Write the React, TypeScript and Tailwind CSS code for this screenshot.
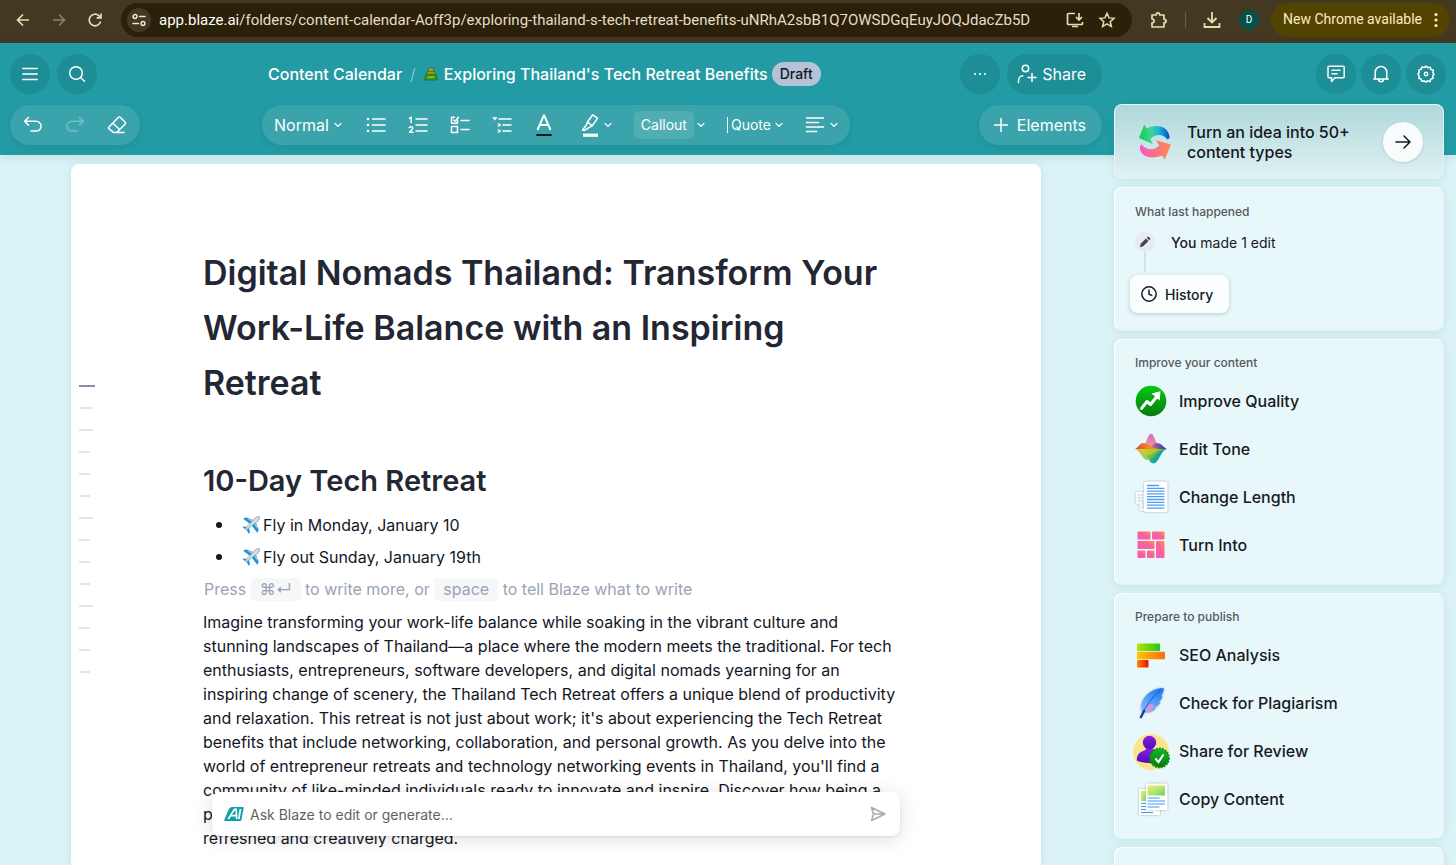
import type { ReactNode } from "react";

type IconProps = { children: ReactNode; className?: string; box?: string };

function Line({ children, className = "size-5", box = "0 0 20 20" }: IconProps) {
  return (
    <svg
      viewBox={box}
      className={`shrink-0 ${className}`}
      fill="none"
      stroke="currentColor"
      strokeWidth="1.5"
      strokeLinecap="round"
      strokeLinejoin="round"
      aria-hidden="true"
    >
      {children}
    </svg>
  );
}

function Chevron() {
  return (
    <Line className="size-2" box="0 0 8 8">
      <path d="M1 2.4 4 5.4 7 2.4" strokeWidth="1.3" />
    </Line>
  );
}

function BrowserBar() {
  return (
    <div className="flex h-[43px] shrink-0 items-center bg-[#433821] pb-1 pl-3.5 pr-1.5 font-[Roboto,'Noto_Sans',sans-serif] text-[#e9dcb0]">
      <button aria-label="Back" className="mr-[18px]">
        <Line className="size-[18px]" box="0 0 18 18">
          <path d="M15 9H4M9 3.5 3.5 9 9 14.5" strokeLinecap="butt" strokeLinejoin="miter" strokeWidth="1.7" />
        </Line>
      </button>
      <button aria-label="Forward" className="mr-[18px] text-[#8d8368]">
        <Line className="size-[18px]" box="0 0 18 18">
          <path d="M3 9h11M9 3.5 14.5 9 9 14.5" strokeLinecap="butt" strokeLinejoin="miter" strokeWidth="1.6" />
        </Line>
      </button>
      <button aria-label="Reload" className="mr-[17px]">
        <Line className="size-[18px]" box="0 0 18 18">
          <path d="M14.6 10.5A5.8 5.8 0 1 1 13 4.8l1.8 1.9M15 2.5v4.4h-4.4" strokeLinecap="butt" strokeLinejoin="miter" strokeWidth="1.7" />
        </Line>
      </button>
      <div className="flex h-[34px] min-w-0 flex-1 items-center rounded-full bg-[#2b2009] pl-1.5 pr-4">
        <span className="mr-2 grid size-6 shrink-0 place-items-center rounded-full bg-[#433821] text-[#ede6d2]">
          <Line className="size-4" box="0 0 16 16">
            <circle cx="4" cy="4.5" r="1.9" />
            <path d="M8.5 4.5H14M2 11.5h5.5" />
            <circle cx="12" cy="11.5" r="1.9" />
          </Line>
        </span>
        <p className="min-w-0 flex-1 truncate text-[15px] leading-5 text-[#e6ddc7]">
          <span className="text-white">app.blaze.ai</span>
          /folders/content-calendar-Aoff3p/exploring-thailand-s-tech-retreat-benefits-uNRhA2sbB1Q7OWSDGqEuyJOQJdacZb5D
        </p>
        <button aria-label="Install app" className="ml-3">
          <Line className="size-[18px]" box="0 0 18 18">
            <path d="M9 2.5H2.5A1 1 0 0 0 1.500 3.500v9a1 1 0 0 0 1 1h13a1 1 0 0 0 1-1V11M6 15.500h6M13 2v6.500M10 6l3 3 3-3" strokeLinecap="butt" strokeLinejoin="miter" strokeWidth="1.7" />
          </Line>
        </button>
        <button aria-label="Bookmark this page" className="ml-3.5">
          <Line className="size-[18px]" box="0 0 18 18">
            <path d="m9 2.300 2 4.600 5 .45-3.800 3.300 1.150 4.900L9 12.950l-4.350 2.600 1.150-4.900L2 7.350l5-.45z" strokeLinejoin="miter" />
          </Line>
        </button>
      </div>
      <button aria-label="Extensions" className="ml-[18px]">
        <Line className="size-[18px]" box="0 0 18 18">
          <path d="M2 4h4.200V3.600a1.700 1.700 0 0 1 3.400 0V4H14v4.300h.4a1.700 1.700 0 0 1 0 3.400H14V16H2v-4.200c1.300 0 2.100-.8 2.100-1.900S3.300 8 2 8z" strokeWidth="1.7" />
        </Line>
      </button>
      <span className="ml-[17px] h-4 w-px bg-[#6d6244]" />
      <button aria-label="Downloads" className="ml-4">
        <Line className="size-5">
          <path d="M10 2v10M5.500 8 10 12.500 14.500 8M2.500 13v4h15v-4" strokeLinecap="butt" strokeLinejoin="miter" strokeWidth="1.8" />
        </Line>
      </button>
      <span className="ml-[17px] grid size-5 place-items-center rounded-full bg-[#04514a] text-[10px] text-white">D</span>
      <button className="ml-3 flex h-[34px] items-center gap-3 rounded-full bg-[#534300] pl-3 pr-3 text-[14px] text-[#fbecc0]">
        New Chrome available
        <svg viewBox="0 0 4 16" className="h-4 w-1" fill="currentColor" aria-hidden="true">
          <circle cx="2" cy="2.500" r="1.600" />
          <circle cx="2" cy="8" r="1.600" />
          <circle cx="2" cy="13.500" r="1.600" />
        </svg>
      </button>
    </div>
  );
}

function RoundButton({ label, children }: { label: string; children: ReactNode }) {
  return (
    <button aria-label={label} className="grid size-10 shrink-0 place-items-center rounded-full bg-[#1d8d96]">
      {children}
    </button>
  );
}

function TitleEmoji() {
  return (
    <svg viewBox="0 0 14 14" className="size-3.5 shrink-0" aria-hidden="true">
      <path d="M4.500 1h5l.7 4H3.800z" fill="#b39a3c" stroke="#5c5a26" strokeWidth=".8" />
      <path d="M3.300 4.300h7.400l.8 3.500h-9z" fill="#6fae1f" stroke="#3f6d17" strokeWidth=".8" />
      <path d="M1.800 7.600h10.400l1.100 5.400H.7z" fill="#3f9620" stroke="#2c6620" strokeWidth=".8" />
      <path d="M4 10.200h6" stroke="#9ad23e" strokeWidth="1.200" />
    </svg>
  );
}

function Header() {
  return (
    <header className="grid shrink-0 grid-cols-[252px_1fr_344px] gap-y-[11px] bg-[#229ba4] px-2.5 pb-2.5 pt-[11px] text-white shadow-[0_2px_10px_rgba(0,90,100,0.12)]">
      <div className="flex gap-[7px]">
        <RoundButton label="Open menu">
          <Line className="size-4" box="0 0 16 16">
            <path d="M0.800 2.500h14.400M.8 8h14.400M.8 13.500h14.400" />
          </Line>
        </RoundButton>
        <RoundButton label="Search">
          <Line className="size-[18px]" box="0 0 18 18">
            <circle cx="8" cy="8" r="6.300" />
            <path d="m12.700 12.700 3.800 3.500" />
          </Line>
        </RoundButton>
      </div>
      <div className="flex items-center justify-between">
        <nav aria-label="Breadcrumb" className="flex items-center pl-1.5 text-[16px] font-medium">
          <a href="#calendar">Content Calendar</a>
          <span className="mx-2 font-light text-[#8fd0d5]">/</span>
          <TitleEmoji />
          <h1 className="ml-1.5">Exploring Thailand's Tech Retreat Benefits</h1>
          <span className="ml-1 rounded-full bg-[#b4c3d8] px-2 text-[14px] font-medium leading-6 text-[#14161d]">Draft</span>
        </nav>
        <div className="flex gap-[7px]">
          <RoundButton label="More">
            <svg viewBox="0 0 16 4" className="h-1 w-4" fill="currentColor" aria-hidden="true">
              <circle cx="3" cy="2" r="1.100" />
              <circle cx="8" cy="2" r="1.100" />
              <circle cx="13" cy="2" r="1.100" />
            </svg>
          </RoundButton>
          <button className="flex h-10 items-center gap-[5px] rounded-full bg-[#1d8d96] pl-2.5 pr-4 text-[16px]">
            <Line className="size-5">
              <circle cx="8.500" cy="4.500" r="3.200" />
              <path d="M1.500 18.500v-2.200a4.500 4.500 0 0 1 4.300-4.500M15 9.500v8M11 13.500h8" />
            </Line>
            Share
          </button>
        </div>
      </div>
      <div className="flex justify-end gap-[5px]">
        <RoundButton label="Comments">
          <Line>
            <path d="M3 2.200h14.200a1 1 0 0 1 1 1v9.600a1 1 0 0 1-1 1H9L5.500 17.500v-3.700H3a1 1 0 0 1-1-1V3.200a1 1 0 0 1 1-1zM6 6.300h8M6 9.700h5" />
          </Line>
        </RoundButton>
        <RoundButton label="Notifications">
          <Line>
            <path d="M4.200 14.800V8.200a5.800 5.800 0 0 1 11.600 0v6.600M2.800 15h14.400M7.500 15.200a2.500 2.500 0 0 0 5 0" />
          </Line>
        </RoundButton>
        <RoundButton label="Settings">
          <Line className="size-[18px]" box="0 0 18 18">
            <path d="m9 1.200 1.800 1.500 2.400-.4.800 2.200 2.300.8-.4 2.400L17 9.200l-1.300 1.800.4 2.200-2.300.9-.8 2.300-2.300-.4L9 17l-1.800-1.100-2.300.4-.8-2.300-2.300-.8.4-2.300L1 9l1.200-1.700-.4-2.200 2.300-.9.8-2.100 2.300.5z" />
            <circle cx="9" cy="9" r="1.700" />
          </Line>
        </RoundButton>
      </div>

      <div className="flex">
        <div className="flex h-10 items-center gap-[22px] rounded-full bg-[#3aa3ab] px-[13px] shadow-[0_2px_6px_rgba(0,80,90,0.12)]">
          <button aria-label="Undo">
            <Line>
              <path d="M5.500 2.500 1.500 6.300l4 3.800M1.500 6.300h11.700a4.900 4.900 0 0 1 0 9.800H8" />
            </Line>
          </button>
          <button aria-label="Redo" className="text-[#76bfc6]">
            <Line>
              <path d="m14.500 2.500 4 3.800-4 3.800M18.500 6.300H6.800a4.900 4.900 0 0 0 0 9.800H12" />
            </Line>
          </button>
          <button aria-label="Clear formatting">
            <Line>
              <path d="M1.800 12.200 11.500 2.300a1.200 1.200 0 0 1 1.700 0l5 5a1.200 1.200 0 0 1 0 1.700l-8.600 8.600H6.800l-5-4a1 1 0 0 1 0-1.400zM5.800 8.200l7 6.300M9.500 17.600h7.500" />
            </Line>
          </button>
        </div>
      </div>
      <div className="flex items-center justify-between">
        <div className="flex h-10 items-center gap-[22px] rounded-full bg-[#3aa3ab] px-3 shadow-[0_2px_6px_rgba(0,80,90,0.12)]">
          <button className="flex items-center gap-[5px] text-[16px]">
            Normal <Chevron />
          </button>
          <div className="flex gap-[18px]">
            <button aria-label="Bulleted list" className="grid size-6 place-items-center">
              <Line>
                <path d="M6.500 4h12.500M6.500 10h12.500M6.500 16h12.500" />
                <path d="M2 4h.01M2 10h.01M2 16h.01" strokeWidth="2.600" />
              </Line>
            </button>
            <button aria-label="Numbered list" className="grid size-6 place-items-center">
              <Line>
                <path d="M8 4h11M8 10h11M8 16h11" />
                <path d="M1.500 3.400 3.200 2.200v5.300M1.300 12.700c.8-1.500 3.600-1.200 3.400.5-.1 1.200-1.900 2.300-3.200 4.100h3.500" />
              </Line>
            </button>
            <button aria-label="Checklist" className="grid size-6 place-items-center">
              <Line>
                <path d="M11 5.500h8M11 14.500h8M7.500 5v3.300H1.500V2.300h3M3.500 5l1.500 1.300 3.500-4M1.500 11.500h6v6h-6z" />
              </Line>
            </button>
            <button aria-label="Toggle list" className="grid size-6 place-items-center">
              <Line>
                <path d="M7 4h12M11 10h8M11 16h8" />
                <path d="M1 2.500h4L3 5zM6.500 8.500 9 10l-2.500 1.500zM6.500 14.500 9 16l-2.500 1.500z" fill="currentColor" strokeWidth=".6" />
              </Line>
            </button>
            <button aria-label="Text colour" className="grid size-6 place-items-center">
              <Line className="size-6" box="0 0 24 24">
                <path d="M5.500 17 12 2l6.500 15M7.700 12h8.600" strokeWidth="1.900" strokeLinecap="butt" strokeLinejoin="bevel" />
                <path d="M5 22h14" stroke="#0b1a1c" strokeWidth="1.900" />
              </Line>
            </button>
          </div>
          <button aria-label="Highlight" className="flex h-7 w-[34px] items-center justify-between">
            <Line className="size-6" box="0 0 24 24">
              <path d="M9.500 9 14.800 1.800l4.700 3.400-5.300 7.700-3.400 1.700-3.800 2.600H4.500l3.500-4.700zM9.500 9l4.700 3.900" />
              <path d="M5 22.200h15" strokeWidth="3.200" strokeLinecap="butt" />
            </Line>
            <Chevron />
          </button>
          <button className="flex items-center gap-[3px] text-[14px]">
            <span className="rounded-md bg-[#50adb4] px-[7px] leading-7">Callout</span>
            <Chevron />
          </button>
          <button className="flex items-center gap-1 text-[14px]">
            <span className="border-l border-white pl-[3px] leading-4">Quote</span>
            <Chevron />
          </button>
          <button aria-label="Align" className="flex items-center gap-[5px]">
            <Line>
              <path d="M1.500 3h17M1.500 7.500h12M1.500 12h17M1.500 16.500h10" />
            </Line>
            <Chevron />
          </button>
        </div>
        <button className="flex h-10 items-center gap-2 rounded-full bg-[#3aa3ab] pl-3.5 pr-4 text-[16px] shadow-[0_2px_6px_rgba(0,80,90,0.12)]">
          <Line className="size-4" box="0 0 16 16">
            <path d="M8 1.500v13M1.500 8h13" />
          </Line>
          Elements
        </button>
      </div>
      <div />
    </header>
  );
}

function Plane() {
  return (
    <svg viewBox="0 0 18 18" className="size-[18px] shrink-0" role="img" aria-label="airplane">
      <path d="M1.200 2.800 3.600 1.200l9.400 3.500-4 4z" fill="#1f97e0" />
      <path d="m15.200 16.800 1.600-2.400L13.300 5l-4 4z" fill="#1f97e0" />
      <path d="m.5 11.600 1.500-1.200 4 .9 1.200 1.200.8 4-1.200 1.200-2.300-4z" fill="#1f97e0" />
      <path d="M17.300.8c-1.300-.8-3 .3-4.200 1.400L4.500 11c-.8 1-1.300 1.900-.9 2.500.6.500 1.600 0 2.500-.8L15.900 5c1.200-1.200 2.200-2.900 1.400-4.200z" fill="#d5dde3" stroke="#7c8f9c" strokeWidth=".7" />
      <path d="m6.500 3.300 4 1.700M14.800 11.500l-1.800-4" stroke="#d5dde3" strokeWidth="1" />
    </svg>
  );
}

const outline = [
  "w-4 bg-[#8590a8]",
  "w-3.5 bg-[#e3e6ea]",
  "w-3.5 bg-[#e3e6ea]",
  "w-[11px] bg-[#e3e6ea]",
  "w-[11px] bg-[#e3e6ea]",
  "w-[11px] bg-[#e3e6ea]",
  "w-3.5 bg-[#e3e6ea]",
  "w-[11px] bg-[#e3e6ea]",
  "w-[11px] bg-[#e3e6ea]",
  "w-[11px] bg-[#e3e6ea]",
  "w-3.5 bg-[#e3e6ea]",
  "w-[11px] bg-[#e3e6ea]",
  "w-[11px] bg-[#e3e6ea]",
  "w-[11px] bg-[#e3e6ea]",
];

function Key({ children }: { children: ReactNode }) {
  return <kbd className="inline-block rounded bg-[#f6f7f9] px-[9px] font-[Inter,'DejaVu_Sans',sans-serif] leading-[23px]">{children}</kbd>;
}

function Flight({ children }: { children: ReactNode }) {
  return (
    <li className="flex items-center gap-[3px] pl-[13px]">
      <span className="mr-[17px] size-[6px] rounded-full bg-[#14161f]" />
      <Plane />
      {children}
    </li>
  );
}

function Document() {
  return (
    <div className="flex min-w-0 flex-1 pl-[71px] pr-[73px] pt-[9px]">
      <main className="relative flex min-w-0 flex-1 rounded-t-lg bg-white shadow-[0_0_8px_rgba(0,90,100,0.1)]">
        <nav aria-label="Outline" className="flex w-[132px] shrink-0 flex-col gap-5 pl-2 pt-[221px]">
          {outline.map((bar, i) => (
            <span key={i} className={`h-0.5 ${bar}`} />
          ))}
        </nav>
        <article className="min-w-0 flex-1 pr-[138px] pt-[81px] text-[16px] leading-6 text-[#14161f]">
          <h2 className="text-[34px] font-semibold leading-[55px] text-[#232733]">
            Digital Nomads Thailand: Transform Your Work-Life Balance with an Inspiring Retreat
          </h2>
          <h3 className="mt-[51px] text-[29px] font-semibold leading-10 text-[#232733]">10-Day Tech Retreat</h3>
          <ul className="mt-2 leading-8">
            <Flight>Fly in Monday, January 10</Flight>
            <Flight>Fly out Sunday, January 19th</Flight>
          </ul>
          <p className="pl-px leading-[33px] text-[#9aa3b5]">
            Press <Key>⌘↵</Key> to write more, or <Key>space</Key> to tell Blaze what to write
          </p>
          <p className="mt-1">
            Imagine transforming your work-life balance while soaking in the vibrant culture and stunning landscapes of
            Thailand—a place where the modern meets the traditional. For tech enthusiasts, entrepreneurs, software
            developers, and digital nomads yearning for an inspiring change of scenery, the Thailand Tech Retreat offers
            a unique blend of productivity and relaxation. This retreat is not just about work; it's about experiencing
            the Tech Retreat benefits that include networking, collaboration, and personal growth. As you delve into the
            world of entrepreneur retreats and technology networking events in Thailand, you'll find a community of
            like-minded individuals ready to innovate and inspire. Discover how being a part of the Thailand Tech Retreat
            experience can transform your work and leave you refreshed and creatively charged.
          </p>
        </article>
        <form className="absolute inset-x-[141px] bottom-[29px] flex h-11 items-center gap-1.5 rounded-lg bg-white pl-3 pr-3.5 shadow-[0_3px_20px_rgba(0,0,0,0.13),0_1px_3px_rgba(0,0,0,0.08)]">
          <svg viewBox="0 0 20 14" className="h-3.5 w-5 shrink-0" aria-hidden="true">
            <path d="M8.500 0H18.600a1 1 0 0 1 1 1.200L17.500 12.800a1.500 1.500 0 0 1-1.500 1.200H1.300A1 1 0 0 1 .4 12.600L4.500 3C5.300 1.200 6.500 0 8.500 0z" fill="#119fa9" />
            <path d="M4.200 12 10.500 2.300h1.700l.5 9.700M7 8.700h5.300M16.500 2 14.800 12" fill="none" stroke="#fff" strokeWidth="1.700" />
          </svg>
          <input
            aria-label="Ask Blaze"
            placeholder="Ask Blaze to edit or generate…"
            className="min-w-0 flex-1 bg-transparent text-[14px] outline-none placeholder:text-[#606266]"
          />
          <button aria-label="Send" className="text-[#a9abad]">
            <Line className="size-4" box="0 0 16 16">
              <path d="M1.500 1.500 15 8 1.500 14.500 3.500 8zM3.500 8H14" />
            </Line>
          </button>
        </form>
      </main>
    </div>
  );
}

function ItemIcon({ children }: { children: ReactNode }) {
  return (
    <svg viewBox="0 0 32 32" className="size-8 shrink-0 overflow-visible" aria-hidden="true">
      {children}
    </svg>
  );
}

function QualityIcon() {
  return (
    <ItemIcon>
      <defs>
        <linearGradient id="quality" x2="0" y2="1">
          <stop stopColor="#05c914" />
          <stop offset="1" stopColor="#067a0d" />
        </linearGradient>
      </defs>
      <circle cx="16" cy="16" r="15.300" fill="url(#quality)" />
      <path d="M6.500 23.500 12 16.500l3.500 3 6-7.500" fill="none" stroke="#fff" strokeWidth="3" strokeLinejoin="round" strokeLinecap="round" />
      <path d="m16.500 8.500 9-2.300-.8 9.300z" fill="#fff" />
    </ItemIcon>
  );
}

function ToneIcon() {
  return (
    <ItemIcon>
      <defs>
        <linearGradient id="tonePink" x2="0" y2="1">
          <stop stopColor="#d56fd0" />
          <stop offset="1" stopColor="#e9a27a" />
        </linearGradient>
        <linearGradient id="toneRed">
          <stop stopColor="#d8202a" />
          <stop offset=".5" stopColor="#ff7d12" />
          <stop offset="1" stopColor="#ffa21a" />
        </linearGradient>
        <linearGradient id="toneBlue">
          <stop stopColor="#ff9a30" stopOpacity=".4" />
          <stop offset=".45" stopColor="#a5609b" />
          <stop offset="1" stopColor="#2432b4" />
        </linearGradient>
        <linearGradient id="toneGreen">
          <stop stopColor="#e9b322" />
          <stop offset=".35" stopColor="#8fc63a" />
          <stop offset="1" stopColor="#5fae3a" />
        </linearGradient>
        <linearGradient id="toneTeal">
          <stop stopColor="#35b67a" />
          <stop offset="1" stopColor="#0598b8" />
        </linearGradient>
      </defs>
      <path d="M6 16C11.500 15 12 .8 16 .8S21 15 27 16z" fill="url(#tonePink)" />
      <path d="M10 16c6-1 8-6 12-6s6 4 10 6z" fill="url(#toneBlue)" />
      <path d="M0 16c4-2 5-6 8.500-6s7 5 15.500 6z" fill="url(#toneRed)" opacity=".9" />
      <path d="M8 16h24c-7 2-8 14.500-13.500 14.500C13 30.500 13 19 8 16z" fill="url(#toneTeal)" />
      <path d="M0 16h30c-8 2-11 11-17.500 11C7 27 6 18 0 16z" fill="url(#toneGreen)" opacity=".85" />
      <path d="M4 16h25c-8 1-11 6-16 6-4 0-5-4-9-6z" fill="#e6cf22" opacity=".6" />
    </ItemIcon>
  );
}

function LengthIcon() {
  return (
    <ItemIcon>
      <g className="drop-shadow-[0_0_1px_rgba(30,60,90,0.35)]">
        <rect x=".8" y="11" width="11" height="12" rx="1" fill="#f6fafd" />
        <rect x="4.500" y="14" width="8" height="16" rx="1" fill="#f6fafd" />
      </g>
      <path d="M3 14h6M3 17h6M3 20h6M6.500 23h4M6.500 26h4" stroke="#a4c9ee" strokeWidth="1.100" strokeDasharray="2 1" />
      <rect x="9" y=".5" width="23.500" height="30.500" rx="1.500" fill="#fff" className="drop-shadow-[0_0_1px_rgba(30,60,90,0.4)]" />
      <path d="M12 4.500h12M12 7.300h17.500M12 10.100h17.500M12 12.900h17.500M12 15.700h17.500M12 18.500h17.500M12 21.300h17.500M12 24.100h17.500M12 27.100h17.500" stroke="#4ba0f4" strokeWidth="1.300" />
    </ItemIcon>
  );
}

function BricksIcon() {
  return (
    <ItemIcon>
      <defs>
        <linearGradient id="brick" x1=".2" y1=".9" x2=".9" y2="0">
          <stop stopColor="#f75bb8" />
          <stop offset=".5" stopColor="#f9609a" />
          <stop offset="1" stopColor="#ff8f50" />
        </linearGradient>
      </defs>
      <g fill="url(#brick)">
        <rect x="2.500" y="2.500" width="13" height="8" rx="1" />
        <rect x="17" y="2.500" width="12.500" height="8" rx="1" />
        <rect x="2.500" y="12" width="17" height="8" rx="1" />
        <rect x="21" y="12" width="8.500" height="17" rx="1" />
        <rect x="2.500" y="21.500" width="8" height="7.500" rx="1" />
        <rect x="12" y="21.500" width="7.500" height="7.500" rx="1" />
      </g>
    </ItemIcon>
  );
}

function SeoIcon() {
  return (
    <ItemIcon>
      <defs>
        <linearGradient id="seoA">
          <stop stopColor="#b4e600" />
          <stop offset="1" stopColor="#27c717" />
        </linearGradient>
        <linearGradient id="seoB">
          <stop stopColor="#ffc800" />
          <stop offset="1" stopColor="#ff6a0a" />
        </linearGradient>
        <linearGradient id="seoC">
          <stop stopColor="#ff8500" />
          <stop offset="1" stopColor="#dc1410" />
        </linearGradient>
      </defs>
      <rect x="2" y="4.500" width="23" height="7.500" rx="1" fill="url(#seoA)" />
      <rect x="2" y="12.800" width="28" height="7.500" rx="1" fill="url(#seoB)" />
      <rect x="2" y="21" width="11.500" height="7.500" rx="1" fill="url(#seoC)" />
    </ItemIcon>
  );
}

function FeatherIcon() {
  return (
    <ItemIcon>
      <defs>
        <linearGradient id="feather" x1=".2" y1="1" x2=".7" y2="0">
          <stop stopColor="#8cb9fb" />
          <stop offset="1" stopColor="#1c7df0" />
        </linearGradient>
      </defs>
      <path d="M28.500 1C18 1 10 7.500 7 15c-1.500 4-1 7.500 0 10l4 .5c5 0 8-2 10-4.500l-2-.3c3-1 5.500-3 6.500-5.700l-2 .2c3-2 3.800-4.500 3.800-6.700l-1.500.3C28.500 6 29 3 28.500 1z" fill="url(#feather)" className="drop-shadow-[0_0_1px_rgba(20,70,130,0.4)]" />
      <path d="M12 21c2-5 5-5 7-2-1 3-4 6-7.500 5.500z" fill="#f78bd0" opacity=".85" />
      <path d="M5.500 31C9 22 15 12 26 3" fill="none" stroke="#1658c8" strokeWidth="1" />
      <path d="M5.500 31 9.500 23" stroke="#123f9d" strokeWidth="2.400" />
    </ItemIcon>
  );
}

function ReviewIcon() {
  return (
    <ItemIcon>
      <defs>
        <linearGradient id="person" x2="0" y2="1">
          <stop stopColor="#8a1fe8" />
          <stop offset="1" stopColor="#5409b5" />
        </linearGradient>
        <linearGradient id="seal" x2="0" y2="1">
          <stop stopColor="#10bb22" />
          <stop offset="1" stopColor="#07790f" />
        </linearGradient>
      </defs>
      <circle cx="16" cy="17" r="18" fill="#fbe58a" />
      <path d="M1.800 25.500c0-6 3-8.500 7-9.700 1.600-.6 2.200-1.300 1.800-2.300h7.800c-.4 1 .2 1.700 1.800 2.300 4 1.200 7 3.700 7 9.700-5 3.200-20.400 3.200-25.400 0z" fill="url(#person)" />
      <circle cx="14.500" cy="7.500" r="6.700" fill="url(#person)" />
      <circle cx="24.500" cy="23" r="9.700" fill="url(#seal)" />
      <circle cx="24.500" cy="23" r="9.700" fill="none" stroke="#0c9118" strokeWidth="1.600" strokeDasharray="1.700 1.300" />
      <path d="m20.300 23.500 3.200 3.500 5-7.500" fill="none" stroke="#fff" strokeWidth="2.100" />
    </ItemIcon>
  );
}

function CopyIcon() {
  return (
    <ItemIcon>
      <defs>
        <linearGradient id="photo" y2="1">
          <stop stopColor="#f0ed72" />
          <stop offset=".6" stopColor="#a6e468" />
          <stop offset="1" stopColor="#58cf7c" />
        </linearGradient>
      </defs>
      <rect x="4" y="6" width="21" height="26" fill="#fff" className="drop-shadow-[0_0_1px_rgba(30,60,90,0.4)]" />
      <rect x="11" y=".5" width="21.500" height="26.500" fill="#fff" className="drop-shadow-[0_0_1px_rgba(30,60,90,0.4)]" />
      <rect x="6" y="8" width="5" height="10" fill="url(#photo)" />
      <path d="M6 20.500h5M6 23.500h5M6 26.500h5M6 29.500h12" stroke="#3d97f0" strokeWidth="1.200" />
      <rect x="12.500" y="2.500" width="17.500" height="10" fill="url(#photo)" />
      <path d="M12.500 15h12M12.500 18h17.500M12.500 21h17.500M12.500 24h12" stroke="#3d97f0" strokeWidth="1.200" />
    </ItemIcon>
  );
}

function SwirlIcon() {
  return (
    <svg viewBox="0 0 34 36" className="h-9 w-[34px] shrink-0" aria-hidden="true">
      <defs>
        <linearGradient id="swirlTop">
          <stop stopColor="#12c957" />
          <stop offset=".4" stopColor="#3fd58c" />
          <stop offset=".65" stopColor="#1cb3dd" />
          <stop offset="1" stopColor="#0b4fc0" />
        </linearGradient>
        <linearGradient id="swirlBottom">
          <stop stopColor="#f25bc8" />
          <stop offset=".5" stopColor="#fb7185" />
          <stop offset="1" stopColor="#fb8a4c" />
        </linearGradient>
      </defs>
      <path d="M6.300.5 1 14l13.700 6-2.200-5c4-5 12-6 17 .5 1.500-.6 2.300-1.400 2-3C30.500 5.500 25 2 18.500 2c-4 0-7.500 1-9.800 2.700z" fill="url(#swirlTop)" />
      <path d="M18 16.300 33 20.500 26.700 35.500l-2.500-4C14 35.500 3 33 2 25c-.2-2 .2-3.800 1.500-4.800 5 6.500 13 6.500 17.800 1.300z" fill="url(#swirlBottom)" />
    </svg>
  );
}

const card = "rounded-lg border border-[#dff2f5] border-l-white border-t-white bg-[#e8f7fa] shadow-[0_1px_8px_rgba(0,90,100,0.1)]";

function ActionCard({ title, items }: { title: string; items: { label: string; icon: ReactNode }[] }) {
  return (
    <section className={`${card} px-5 pb-[15px] pt-[15px]`}>
      <h2 className="mb-1.5 text-[12px] font-medium leading-4 text-[#57595d]">{title}</h2>
      <ul>
        {items.map((item) => (
          <li key={item.label}>
            <button className="flex h-12 items-center gap-3 text-[16px] font-medium text-[#171a22]">
              {item.icon}
              {item.label}
            </button>
          </li>
        ))}
      </ul>
    </section>
  );
}

function Sidebar() {
  return (
    <aside className="relative z-10 -mt-[51px] flex w-[342px] shrink-0 flex-col gap-2 pr-3">
      <section className="flex h-[75px] shrink-0 items-center rounded-lg border border-b-[#dff2f5] border-l-[#e8f7fa] border-r-[#dff2f5] border-t-[#e8f7fa] bg-linear-to-b from-[#aed8db] to-[#e0f1f3] pl-[23px] pr-5 shadow-[0_1px_8px_rgba(0,90,100,0.1)]">
        <SwirlIcon />
        <h2 className="ml-[15px] flex-1 text-[16px] font-medium leading-5 text-[#14161d]">
          Turn an idea into 50+
          <br />
          content types
        </h2>
        <button aria-label="Start" className="grid size-10 place-items-center rounded-full bg-[#f8fcfd] text-[#14161d] shadow-sm">
          <Line className="size-4" box="0 0 16 16">
            <path d="M1 8h14M9 2l6 6-6 6" />
          </Line>
        </button>
      </section>
      <section className={`${card} px-[15px] pb-[17px] pt-4`}>
        <h2 className="pl-[5px] text-[12px] font-medium leading-4 text-[#57595d]">What last happened</h2>
        <div className="mt-3 flex h-5 items-center gap-4 pl-[5px] text-[14px] text-[#171a22]">
          <span className="grid size-5 place-items-center rounded-full bg-[#e9e9f0] text-[#3c4560]">
            <svg viewBox="0 0 12 12" className="size-3" fill="currentColor" aria-hidden="true">
              <path d="m.8 11.200.9-3.400L7 2.500 9.500 5l-5.300 5.300zM7.800 1.700l.7-.7a1 1 0 0 1 1.400 0l1.100 1.100a1 1 0 0 1 0 1.400l-.7.7z" />
            </svg>
          </span>
          <p>
            <span className="font-medium">You</span> made 1 edit
          </p>
        </div>
        <div className="ml-3.5 h-5 w-0.5 bg-[#d3e2e5]" />
        <button className="mt-[3px] flex h-[38px] items-center gap-2 rounded-lg bg-[#fafefe] px-[11px] pr-4 text-[14px] font-medium text-[#171a22] shadow-[0_1px_4px_rgba(0,40,50,0.22)]">
          <Line className="size-4" box="0 0 16 16">
            <circle cx="8" cy="8" r="7.200" />
            <path d="M8 4v4.200l2.800 1.200" />
          </Line>
          History
        </button>
      </section>
      <ActionCard
        title="Improve your content"
        items={[
          { label: "Improve Quality", icon: <QualityIcon /> },
          { label: "Edit Tone", icon: <ToneIcon /> },
          { label: "Change Length", icon: <LengthIcon /> },
          { label: "Turn Into", icon: <BricksIcon /> },
        ]}
      />
      <ActionCard
        title="Prepare to publish"
        items={[
          { label: "SEO Analysis", icon: <SeoIcon /> },
          { label: "Check for Plagiarism", icon: <FeatherIcon /> },
          { label: "Share for Review", icon: <ReviewIcon /> },
          { label: "Copy Content", icon: <CopyIcon /> },
        ]}
      />
      <section className={`${card} h-24 shrink-0`} />
    </aside>
  );
}

export default function App() {
  return (
    <div className="flex h-screen flex-col overflow-hidden bg-[#daf3f6] font-[Inter,'Liberation_Sans',sans-serif]">
      <BrowserBar />
      <Header />
      <div className="flex min-h-0 flex-1">
        <Document />
        <Sidebar />
      </div>
    </div>
  );
}
